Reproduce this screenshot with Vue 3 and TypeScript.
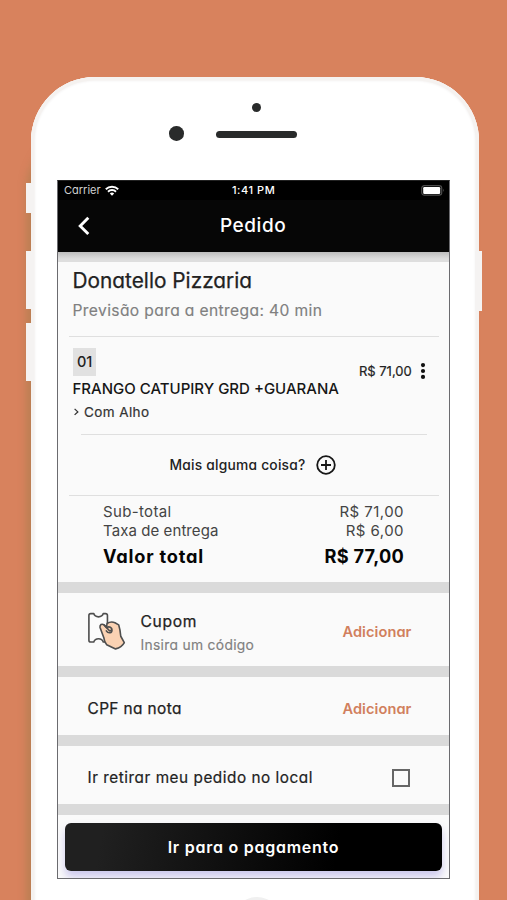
<script setup lang="ts">
interface CostLine {
  label: string
  value: string
  kind: string
}

const costs: CostLine[] = [
  { label: 'Sub-total', value: 'R$ 71,00', kind: 'sub' },
  { label: 'Taxa de entrega', value: 'R$ 6,00', kind: 'fee' },
  { label: 'Valor total', value: 'R$ 77,00', kind: 'total' },
]
</script>

<template>
  <div class="stage">
    <div class="phone">
      <i class="camera"></i>
      <i class="sensor"></i>
      <i class="speaker"></i>

      <main class="screen">
        <header class="top">
          <div class="status">
            <span class="carrier">Carrier</span>
            <svg class="wifi" width="14" height="11" viewBox="0 0 14 11">
              <g fill="none" stroke="#fff" stroke-width="1.9">
                <path d="M0.8 4.2a8.9 8.9 0 0 1 12.4 0" />
                <path d="M3 6.7a5.7 5.7 0 0 1 8 0" />
              </g>
              <path d="M7 10.8L4.8 8.5a3.2 3.2 0 0 1 4.4 0z" fill="#fff" />
            </svg>
            <span class="clock">1:41 PM</span>
            <svg class="battery" width="24" height="11" viewBox="0 0 24 11">
              <rect x="0.7" y="0.7" width="20" height="9.4" rx="2.6" fill="#000" stroke="#4c4c4c" stroke-width="1.2" />
              <rect x="2.2" y="2" width="17" height="7" rx="1.2" fill="#fff" />
              <path d="M22 3.8q1.5 1.6 0 3.2z" fill="#5a5a5a" />
            </svg>
          </div>
          <div class="nav">
            <svg class="back" width="14" height="20" viewBox="0 0 14 20">
              <path d="M11.3 1.7L3.2 9.9l8.1 8.2" fill="none" stroke="#fff" stroke-width="2.9" />
            </svg>
            <h1>Pedido</h1>
          </div>
        </header>

        <div class="band first"></div>

        <section class="order">
          <div class="store">
            <h2>Donatello Pizzaria</h2>
            <p>Previsão para a entrega: 40 min</p>
          </div>
          <div class="item">
            <div class="item-main">
              <span class="qty">01</span>
              <span class="name">FRANGO CATUPIRY GRD +GUARANA</span>
              <span class="extra">
                <svg width="5" height="8" viewBox="0 0 5 8"><path d="M0.6 0.9L3.8 3.9L0.6 6.9" fill="none" stroke="#333" stroke-width="1.3" /></svg>
                Com Alho
              </span>
            </div>
            <span class="price">R$ 71,00</span>
            <svg class="more" width="6" height="18" viewBox="0 0 6 18">
              <circle cx="3" cy="3.1" r="2.1" /><circle cx="3" cy="9" r="2.1" /><circle cx="3" cy="14.9" r="2.1" />
            </svg>
          </div>
          <div class="another">
            <span>Mais alguma coisa?</span>
            <svg width="20" height="20" viewBox="0 0 20 20" fill="none" stroke="#161616" stroke-width="1.8">
              <circle cx="10" cy="10" r="8.8" /><path d="M10 5v10M5 10h10" />
            </svg>
          </div>
          <div class="costs">
            <div v-for="line in costs" :key="line.kind" class="cost" :class="line.kind">
              <span class="cost-label">{{ line.label }}</span>
              <span class="cost-value">{{ line.value }}</span>
            </div>
          </div>
        </section>

        <div class="band"></div>

        <section class="coupon">
          <svg class="hand" width="39" height="39" viewBox="0 0 40 41" stroke="#4e4e4e" stroke-width="1.7" stroke-linejoin="round" stroke-linecap="round">
            <path d="M21 13V3.6Q21 1.7 19 1.7H16.6A5.2 4.7 0 0 1 6.6 1.7H3.4Q1.5 1.7 1.5 3.6V29.6Q1.5 31.6 3.4 31.6H6.6A5.2 4.7 0 0 1 16.6 31.6H18" fill="#fcfcfc" />
            <path d="M29.5 38.8L20.2 34.4Q17.7 31.7 17.3 27.4L13.2 16.3Q12.8 14.3 14.3 13.1Q16 12.3 17.7 13.8L20 16.2L20.6 12.1Q24.6 9.5 28.9 11.3L32.8 13.5Q34.4 18.7 35 25.5L38.7 32.2Q36 37.4 29.5 38.8Z" fill="#fad2b3" />
            <path d="M17.7 13.8L22.6 19.2Q23.6 20.3 24.6 19.4" fill="none" />
            <path d="M20 16.2Q23.5 14.6 25.4 17.3Q26.4 20 24.6 21.6Q21.6 22.6 19.8 19.8" fill="none" />
          </svg>
          <div class="coupon-text">
            <span class="title">Cupom</span>
            <span class="hint">Insira um código</span>
          </div>
          <a class="add">Adicionar</a>
        </section>

        <div class="band"></div>

        <section class="cpf">
          <span class="cpf-label">CPF na nota</span>
          <a class="add">Adicionar</a>
        </section>

        <div class="band"></div>

        <section class="pickup">
          <span class="pickup-label">Ir retirar meu pedido no local</span>
          <i class="box"></i>
        </section>

        <div class="band"></div>

        <footer class="bottom">
          <button class="pay">Ir para o pagamento</button>
        </footer>
      </main>

      <i class="home"></i>
    </div>

    <i class="side mute"></i>
    <i class="side vol-up"></i>
    <i class="side vol-down"></i>
    <i class="side power"></i>
  </div>
</template>

<style>
body { margin: 0; }
</style>

<style scoped>
* { box-sizing: border-box; }
.stage {
  position: relative;
  width: 507px;
  height: 900px;
  overflow: hidden;
  background: #d8825d;
  font-family: Inter, "Open Sans", sans-serif;
  font-feature-settings: "cv11";
  color: #222;
  white-space: nowrap;
}
.side { position: absolute; background: #f5f3f2; width: 8px; left: 26.3px; }
.mute { top: 182.7px; height: 30.6px; }
.vol-up { top: 251px; height: 58px; }
.vol-down { top: 322.7px; height: 58px; }
.power { left: 474.5px; width: 7.2px; top: 251px; height: 60px; }
.phone {
  position: relative;
  width: 448px;
  height: 1000px;
  margin: 0 0 0 30.7px;
  top: 76.7px;
  padding: 103.3px 0 0 26.3px;
  border-radius: 64px;
  background: #fff;
  box-shadow: inset 0 0 0 3.5px #f5f2f0, inset 0 0 2px 4.5px #f8f7f7, -6px 50px 9px -2px rgba(160, 125, 75, 0.6);
}
.camera, .sensor, .speaker, .home { position: absolute; background: #292b2b; border-radius: 50%; }
.camera { left: 221.2px; top: 26px; width: 9.6px; height: 9.6px; }
.sensor { left: 138.3px; top: 49.3px; width: 14.6px; height: 14.6px; }
.speaker { left: 185.6px; top: 54px; width: 80.6px; height: 7px; border-radius: 4px; }
.home { left: 201px; top: 820px; width: 50px; height: 50px; background: #f0f0f0; }

.screen {
  width: 393px;
  height: 699px;
  border: 1px solid #6b6b6f;
  border-top-color: #222;
  background: #fafafa;
  display: flex;
  flex-direction: column;
  overflow: hidden;
}
.top { height: 71.5px; background: #060606; color: #fff; flex: none; }
.status {
  height: 19px;
  background: #000;
  display: grid;
  grid-template-columns: 41px 127px 1fr 28px;
  align-items: center;
  padding-left: 6px;
  font-size: 11px;
}
.carrier { color: #d0d0d0; }
.clock { font-weight: 500; letter-spacing: 0.55px; }
.nav { height: 52px; display: flex; align-items: center; padding-left: 19px; }
.back { flex: none; margin-top: 1px; }
.nav h1 { margin: 0 0 0 129px; font-size: 19px; line-height: 24px; font-weight: 500; letter-spacing: 0.55px; }
.band { height: 11px; flex: none; background: #dadada; }
.band.first { height: 9.5px; background: linear-gradient(#bdbdbd, #dedede 70%); }

.order { height: 320px; flex: none; }
.store { height: 75.5px; margin: 0 10px 0 11px; padding: 6px 0 0 3.5px; border-bottom: 1.5px solid #dfdfdf; }
.store h2 { margin: 0; font-size: 20.8px; line-height: 26px; font-weight: 400; letter-spacing: 0.02px; -webkit-text-stroke: 0.25px #222; }
.store p { margin: 6px 0 0; font-size: 15.6px; line-height: 22px; letter-spacing: 0.38px; color: #808080; -webkit-text-stroke: 0.15px #808080; }
.item {
  height: 98px;
  margin: 0 22px 0 23px;
  border-bottom: 1.5px solid #dfdfdf;
  display: flex;
  align-items: flex-start;
}
.item-main { display: flex; flex-direction: column; margin-left: -8px; width: 286px; padding-top: 11px; }
.qty {
  width: 23px;
  height: 28px;
  background: #e1e1e1;
  font-size: 14.5px;
  line-height: 28px;
  font-weight: 500;
  text-align: center;
  letter-spacing: -0.1px;
}
.name { margin-top: 3px; margin-left: -0.5px; font-size: 15px; line-height: 20px; font-weight: 500; color: #161616; }
.extra { margin-top: 3px; font-size: 13.5px; line-height: 20px; letter-spacing: 0.4px; color: #333; display: flex; align-items: center; gap: 5px; padding-left: 1px; -webkit-text-stroke: 0.2px #333; }
.price { margin-top: 24px; width: 53px; font-size: 13px; line-height: 20px; color: #222; letter-spacing: -0.02px; -webkit-text-stroke: 0.2px #222; }
.more { margin: 25px 0 0 8px; fill: #111; flex: none; }
.another { height: 61px; margin: 0 10px 0 11px; border-bottom: 1.5px solid #dfdfdf; display: flex; align-items: center; gap: 9.5px; padding-left: 100.5px; }
.another span { font-size: 13.8px; font-weight: 500; letter-spacing: 0.22px; color: #222; width: 137px; }
.another svg { flex: none; }
.costs { padding: 7px 45px 0 45px; font-feature-settings: normal; }
.cost { display: flex; justify-content: space-between; font-size: 15px; line-height: 18.4px; color: #444; letter-spacing: 0.35px; }
.cost.fee .cost-label { letter-spacing: 0.08px; }
.cost.sub .cost-value, .cost.fee .cost-value { letter-spacing: 0.45px; }
.cost.total { margin-top: 4px; font-size: 18.2px; line-height: 25px; font-weight: 700; color: #050505; font-feature-settings: "cv11"; }
.cost.total .cost-label { letter-spacing: 0.8px; }
.cost.total .cost-value { letter-spacing: 0.25px; }

.coupon { height: 73px; flex: none; display: flex; align-items: center; padding: 0 37.5px 0 29px; }
.hand { flex: none; margin-top: 5px; }
.coupon-text { display: flex; flex-direction: column; gap: 3px; margin-left: 14.5px; padding-top: 7.5px; flex: 1; }
.title { font-size: 15.6px; line-height: 20px; letter-spacing: 0.7px; -webkit-text-stroke: 0.25px #222; }
.hint { font-size: 13.8px; line-height: 20px; letter-spacing: 0.32px; color: #808080; -webkit-text-stroke: 0.15px #808080; }
.add { color: #d17f5d; font-size: 14.6px; line-height: 20px; font-weight: 600; letter-spacing: 0.08px; padding-top: 5px; }
.cpf { height: 58.5px; flex: none; display: flex; justify-content: space-between; align-items: center; padding: 5px 37.5px 0 29.5px; }
.cpf .add { padding-top: 0; }
.cpf-label { font-size: 15.4px; line-height: 20px; letter-spacing: 0.4px; -webkit-text-stroke: 0.25px #222; }
.pickup { height: 58px; flex: none; display: flex; justify-content: space-between; align-items: center; padding: 5px 39px 0 29.5px; }
.pickup-label { font-size: 15.3px; line-height: 20px; letter-spacing: 0.54px; -webkit-text-stroke: 0.2px #222; }
.box { width: 17.5px; height: 17.5px; border: 2px solid #666; }
.bottom { flex: 1; padding: 8px 7px 0; }
.pay {
  display: block;
  width: 377px;
  height: 47.5px;
  border: 0;
  border-radius: 6px;
  background: linear-gradient(100deg, #202020 10%, #000 72%);
  box-shadow: 0 6px 8px rgba(120, 110, 215, 0.35);
  color: #fff;
  font-family: inherit;
  font-feature-settings: inherit;
  font-size: 16px;
  font-weight: 600;
  letter-spacing: 0.75px;
  padding: 0;
}
</style>
